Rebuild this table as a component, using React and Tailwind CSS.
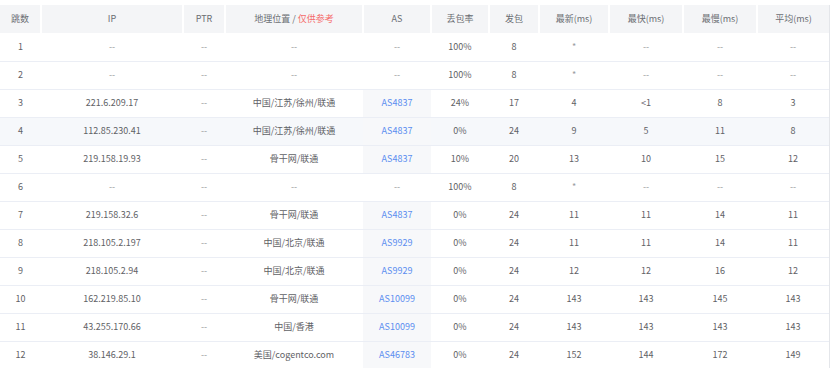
import React from "react";

const cols = [
  { key: "hop", label: "跳数", w: 41 },
  { key: "ip", label: "IP", w: 142 },
  { key: "ptr", label: "PTR", w: 42 },
  { key: "geo", label: "geo", w: 138 },
  { key: "as", label: "AS", w: 68 },
  { key: "loss", label: "丢包率", w: 58 },
  { key: "sent", label: "发包", w: 50 },
  { key: "last", label: "最新(ms)", w: 70 },
  { key: "best", label: "最快(ms)", w: 74 },
  { key: "worst", label: "最慢(ms)", w: 74 },
  { key: "avg", label: "平均(ms)", w: 72 },
];

const rows = [
  ["1", "--", "--", "--", "--", "100%", "8", "*", "--", "--", "--"],
  ["2", "--", "--", "--", "--", "100%", "8", "*", "--", "--", "--"],
  ["3", "221.6.209.17", "--", "中国/江苏/徐州/联通", "AS4837", "24%", "17", "4", "<1", "8", "3"],
  ["4", "112.85.230.41", "--", "中国/江苏/徐州/联通", "AS4837", "0%", "24", "9", "5", "11", "8"],
  ["5", "219.158.19.93", "--", "骨干网/联通", "AS4837", "10%", "20", "13", "10", "15", "12"],
  ["6", "--", "--", "--", "--", "100%", "8", "*", "--", "--", "--"],
  ["7", "219.158.32.6", "--", "骨干网/联通", "AS4837", "0%", "24", "11", "11", "14", "11"],
  ["8", "218.105.2.197", "--", "中国/北京/联通", "AS9929", "0%", "24", "11", "11", "14", "11"],
  ["9", "218.105.2.94", "--", "中国/北京/联通", "AS9929", "0%", "24", "12", "12", "16", "12"],
  ["10", "162.219.85.10", "--", "骨干网/联通", "AS10099", "0%", "24", "143", "143", "145", "143"],
  ["11", "43.255.170.66", "--", "中国/香港", "AS10099", "0%", "24", "143", "143", "143", "143"],
  ["12", "38.146.29.1", "--", "美国/cogentco.com", "AS46783", "0%", "24", "152", "144", "172", "149"],
];

export default function App() {
  return (
    <div
      className="w-[832px] h-[368px] overflow-hidden bg-white pt-[5px]"
      style={{ fontFamily: '"Noto Sans CJK SC", "Noto Sans", sans-serif' }}
    >
      <div className="w-[830px] border-r border-[#e4e6ea]">
        <table className="table-fixed border-collapse w-[829px] text-[9px] text-[#5f6266]">
          <colgroup>
            {cols.map((c) => (
              <col key={c.key} style={{ width: c.w }} />
            ))}
          </colgroup>
          <thead>
            <tr className="h-[28px] bg-[#f4f5f7]">
              {cols.map((c, i) => (
                <th
                  key={c.key}
                  className={`font-normal text-center text-[#6b6e73] p-0 ${
                    i < cols.length - 1 ? "border-r-2 border-white" : ""
                  }`}
                >
                  {c.key === "geo" ? (
                    <span>
                      地理位置 / <span className="text-[#f56c6c]">仅供参考</span>
                    </span>
                  ) : (
                    c.label
                  )}
                </th>
              ))}
            </tr>
          </thead>
          <tbody>
            {rows.map((r, ri) => (
              <tr
                key={ri}
                className={`h-[28px] border-b border-[#ebeef5] ${
                  ri === 3 ? "bg-[#f6f8fb]" : "bg-white"
                }`}
              >
                {r.map((v, ci) => {
                  const isAs = ci === 4 && v !== "--";
                  const dash = v === "--" || v === "*";
                  return (
                    <td
                      key={ci}
                      className={`p-0 text-center whitespace-nowrap ${
                        isAs ? "bg-[#f7f8fa] text-[#5b8ef0]" : ""
                      } ${dash ? "text-[#9a9ca0]" : ""}`}
                    >
                      {v}
                    </td>
                  );
                })}
              </tr>
            ))}
          </tbody>
        </table>
      </div>
    </div>
  );
}
